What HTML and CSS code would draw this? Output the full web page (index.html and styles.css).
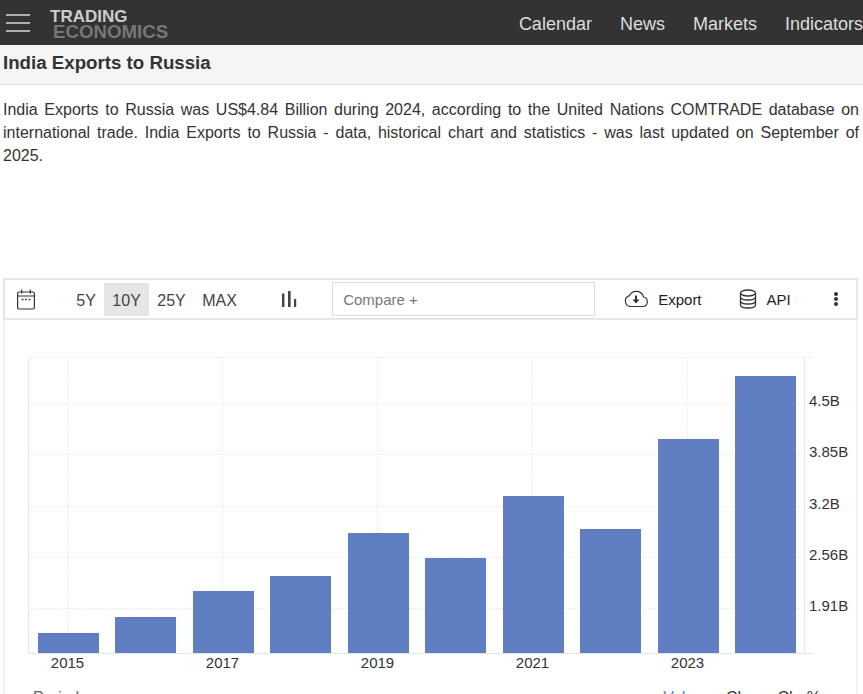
FILE: index.html
```html
<!DOCTYPE html>
<html>
<head>
  <title>India Exports to Russia</title>
  <link rel="stylesheet" href="styles.css">
</head>
<body>
  <header class="navbar">
    <div class="burger"><span></span><span></span><span></span></div>
    <div class="logo">
      <div class="logo-top">TRADING</div>
      <div class="logo-bottom">ECONOMICS</div>
    </div>
    <nav class="nav-links">
      <a>Calendar</a>
      <a>News</a>
      <a>Markets</a>
      <a>Indicators</a>
    </nav>
  </header>

  <div class="title-bar">
    <h1>India Exports to Russia</h1>
  </div>

  <p class="description">India Exports to Russia was US$4.84 Billion during 2024, according to the United Nations COMTRADE database on international trade. India Exports to Russia - data, historical chart and statistics - was last updated on September of 2025.</p>

  <div class="chart-box">
    <div class="toolbar">
      <svg class="icon-calendar" width="20" height="22" viewBox="0 0 20 22" fill="none" stroke="#333" stroke-width="1.2">
        <rect x="1.600" y="4" width="16.800" height="17" rx="1.500"/>
        <path d="M1.600 8h16.800M5.700 1.500v4M14.300 1.500v4"/>
        <path d="M5.800 11.500h1.700M9.200 11.500h1.700M12.600 11.500h1.700" stroke-width="1.500"/>
      </svg>
      <div class="ranges">
        <span class="range">5Y</span>
        <span class="range active">10Y</span>
        <span class="range">25Y</span>
        <span class="range">MAX</span>
      </div>
      <svg class="icon-bars" width="16" height="16" viewBox="0 0 16 16" fill="#444">
        <rect x="1" y="2.500" width="2.400" height="13.500"/>
        <rect x="7" y="0" width="2.600" height="16"/>
        <rect x="13" y="8" width="2.200" height="8"/>
      </svg>
      <div class="compare">Compare +</div>
      <div class="tool export">
        <svg width="26" height="18" viewBox="0 0 26 18" fill="none" stroke="#333" stroke-width="1.2">
          <path d="M7 16.500h12.500a4.800 4.800 0 0 0 1-9.500A7.500 7.500 0 0 0 6.500 5.600 5.600 5.600 0 0 0 7 16.500z"/>
          <path d="M13 5.500v4.500" stroke-width="2"/>
          <path d="M9.500 9.500h7L13 13.500z" fill="#333" stroke="none"/>
        </svg>
        <span>Export</span>
      </div>
      <div class="tool api">
        <svg width="18" height="20" viewBox="0 0 18 20" fill="none" stroke="#333" stroke-width="1.300">
          <ellipse cx="9" cy="4" rx="7.500" ry="3"/>
          <path d="M1.500 4v12c0 1.700 3.400 3 7.500 3s7.500-1.300 7.500-3V4"/>
          <path d="M1.500 8c0 1.700 3.400 3 7.500 3s7.500-1.300 7.500-3M1.500 12c0 1.700 3.400 3 7.500 3s7.500-1.300 7.500-3"/>
        </svg>
        <span>API</span>
      </div>
      <div class="dots"><i></i><i></i><i></i></div>
    </div>

    <svg class="chart" width="853" height="364" viewBox="0 0 853 364">
      <g class="grid">
        <path d="M24 37.500H809M24 83.500H799M24 134.500H799M24 186.500H799M24 237.500H799M24 288.500H799"/>
        <path d="M63.500 37V333M218.500 37V333M373.500 37V333M528.500 37V333M683.500 37V333"/>
      </g>
      <path class="axis" d="M24.500 37V333M800.500 37V333M24 333.500H809"/>
      <g class="bars">
        <rect x="34" y="313" width="61" height="20"/>
        <rect x="111" y="297" width="61" height="36"/>
        <rect x="189" y="271" width="61" height="62"/>
        <rect x="266" y="256" width="61" height="77"/>
        <rect x="344" y="213" width="61" height="120"/>
        <rect x="421" y="238" width="61" height="95"/>
        <rect x="499" y="176" width="61" height="157"/>
        <rect x="576" y="209" width="61" height="124"/>
        <rect x="654" y="119" width="61" height="214"/>
        <rect x="731" y="56" width="61" height="277"/>
      </g>
      <g class="labels">
        <text x="63.500" y="348" text-anchor="middle">2015</text>
        <text x="218.500" y="348" text-anchor="middle">2017</text>
        <text x="373.500" y="348" text-anchor="middle">2019</text>
        <text x="528.500" y="348" text-anchor="middle">2021</text>
        <text x="683.500" y="348" text-anchor="middle">2023</text>
        <text x="805" y="86">4.5B</text>
        <text x="805" y="137">3.85B</text>
        <text x="805" y="189">3.2B</text>
        <text x="805" y="240">2.56B</text>
        <text x="805" y="291">1.91B</text>
      </g>
    </svg>

    <div class="chart-footer">
      <span class="footer-left">Period</span>
      <div class="footer-right">
        <span class="selected">Value</span>
        <span>Chg</span>
        <span>Chg%</span>
      </div>
    </div>
  </div>
</body>
</html>
```

FILE: styles.css
```css
html, body {
  height: 694px;
  overflow: hidden;
}

body {
  margin: 0;
  font-family: "Liberation Sans", Arial, sans-serif;
  color: #333;
  background-color: #fff;
}

.navbar {
  display: flex;
  align-items: center;
  height: 45px;
  background-color: #333;
}

.burger {
  display: flex;
  flex-direction: column;
  gap: 6px;
  width: 24px;
  margin-left: 6px;
}

.burger span {
  height: 2px;
  background-color: #b0b0b0;
}

.logo {
  margin-left: 20px;
  padding-top: 3px;
  font-weight: bold;
}

.logo-top {
  font-size: 17px;
  line-height: 15px;
  color: #ccc;
}

.logo-bottom {
  font-size: 18.7px;
  line-height: 15px;
  margin-left: 3px;
  color: #777;
}

.nav-links {
  display: flex;
  gap: 28px;
  margin-left: auto;
  padding-top: 3px;
  font-size: 18px;
  color: #ddd;
  white-space: nowrap;
}

.title-bar {
  height: 40px;
  box-sizing: border-box;
  padding: 7px 3px 0;
  background-color: #f5f5f5;
  border-bottom: 1px solid #ddd;
}

h1 {
  margin: 0;
  font-size: 18.7px;
  line-height: 21px;
  font-weight: bold;
  color: #333;
}

.description {
  margin: 0;
  padding: 13px 4px 0 3px;
  height: 193px;
  box-sizing: border-box;
  font-size: 16px;
  line-height: 23px;
  text-align: justify;
}

.chart-box {
  margin: 0 5px 0 3px;
  border-left: 2px solid #f2f2f2;
  border-right: 2px solid #f2f2f2;
}

.toolbar {
  display: flex;
  align-items: center;
  height: 42px;
  box-sizing: border-box;
  border: 2px solid #e6e6e6;
  margin: 0 -2px;
  font-size: 16px;
}

.icon-calendar {
  margin-left: 11px;
}

.ranges {
  display: flex;
  margin-left: 32px;
}

.range {
  padding: 2px 8.25px 0;
  line-height: 31px;
  color: #444;
}

.range.active {
  background-color: #e6e6e6;
}

.icon-bars {
  margin-left: 36px;
}

.compare {
  width: 263px;
  height: 34px;
  box-sizing: border-box;
  margin-left: 35px;
  padding-left: 10px;
  border: 1px solid #ddd;
  font-size: 15px;
  line-height: 34px;
  color: #777;
}

.tool {
  display: flex;
  align-items: center;
  gap: 9px;
  color: #222;
  font-size: 15px;
}

.export {
  margin-left: 28px;
}

.api {
  margin-left: 37px;
  gap: 10px;
}

.dots {
  display: flex;
  flex-direction: column;
  gap: 1px;
  margin-left: 43px;
}

.dots i {
  width: 4px;
  height: 4px;
  border-radius: 50%;
  background-color: #333;
}

.chart {
  display: block;
  margin-left: -1px;
}

.grid path {
  fill: none;
  stroke: #e0e0e0;
  stroke-dasharray: 1 2;
}

.axis {
  fill: none;
  stroke: #e6e6e6;
}

.bars rect {
  fill: #5f7fc2;
}

.labels text {
  font-size: 15px;
  fill: #333;
}

.chart-footer {
  display: flex;
  justify-content: space-between;
  padding: 5px 35px 0 28px;
  font-size: 16px;
  color: #333;
}

.footer-left {
  color: #666;
}

.footer-right {
  display: flex;
  gap: 22px;
}

.selected {
  color: #5f7fc2;
  margin-right: 1px;
}
```
